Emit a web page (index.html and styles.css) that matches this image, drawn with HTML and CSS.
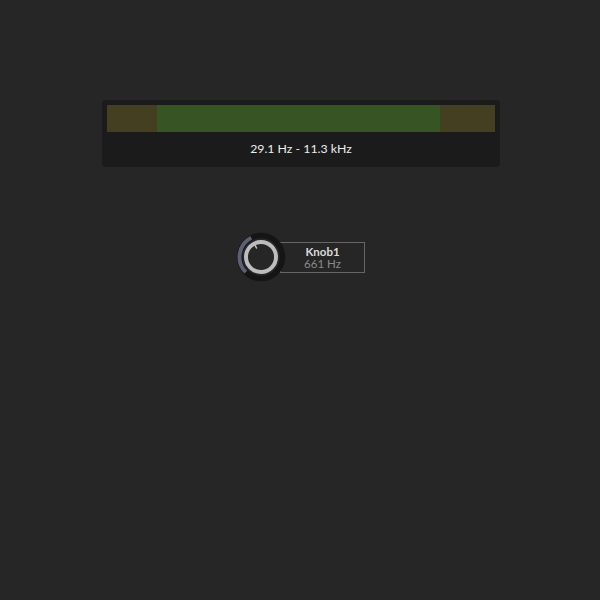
FILE: index.html
```html
<!DOCTYPE html>
<html>
<head>
<meta charset="utf-8">
<link rel="stylesheet" href="styles.css">
</head>
<body>
<div class="panel">
  <div class="bar">
    <div class="seg olive" style="width:50px"></div>
    <div class="seg green" style="width:283px"></div>
    <div class="seg olive fill"></div>
  </div>
  <div class="range">29.1 Hz - 11.3 kHz</div>
</div>
<div class="knob-row">
  <svg class="knob" width="50" height="50" viewBox="0 0 50 50">
    <circle cx="25" cy="25" r="21.5" fill="none" stroke="#151515" stroke-width="5.5"/>
    <path d="M9.8 40.2 A21.5 21.5 0 0 1 15.24 5.84" fill="none" stroke="#5b6072" stroke-width="4"/>
    <circle cx="25" cy="25" r="16.5" fill="#262626" stroke="#1c1c1c" stroke-width="1"/>
    <circle cx="25" cy="25" r="15" fill="none" stroke="#bdbdbd" stroke-width="4"/>
    <line x1="18.2" y1="11.6" x2="20.5" y2="16" stroke="#bdbdbd" stroke-width="1.6" stroke-linecap="round"/>
  </svg>
  <div class="label">
    <div class="name">Knob1</div>
    <div class="value">661 Hz</div>
  </div>
</div>
</body>
</html>
```
FILE: styles.css
```css
html, body {
  margin: 0;
  padding: 0;
  background: #262626;
  font-family: Lato, "DejaVu Sans", sans-serif;
}
.panel {
  margin: 100px 0 0 102px;
  width: 388px;
  height: 57px;
  padding: 5px;
  background: #1b1b1b;
  border-radius: 4px;
  display: flex;
  flex-direction: column;
}
.bar {
  display: flex;
  height: 27px;
}
.seg { height: 100%; }
.olive { background: #453f22; }
.green { background: #375425; }
.fill { flex: 1; }
.range {
  flex: 1;
  display: flex;
  align-items: center;
  justify-content: center;
  color: #ededed;
  font-size: 12.3px;
  padding-top: 3px;
}
.knob-row {
  display: flex;
  align-items: center;
  margin: 65px 0 0 236px;
}
.knob {
  display: block;
  position: relative;
  z-index: 1;
}
.label {
  margin-left: -6px;
  width: 83px;
  height: 28px;
  border: 1px solid #666;
  display: flex;
  flex-direction: column;
  align-items: center;
  justify-content: center;
  font-size: 11.5px;
  line-height: 12px;
  padding-top: 1px;
}
.name {
  color: #dcdcdc;
  font-weight: bold;
}
.value {
  color: #8a8a8a;
}
```
